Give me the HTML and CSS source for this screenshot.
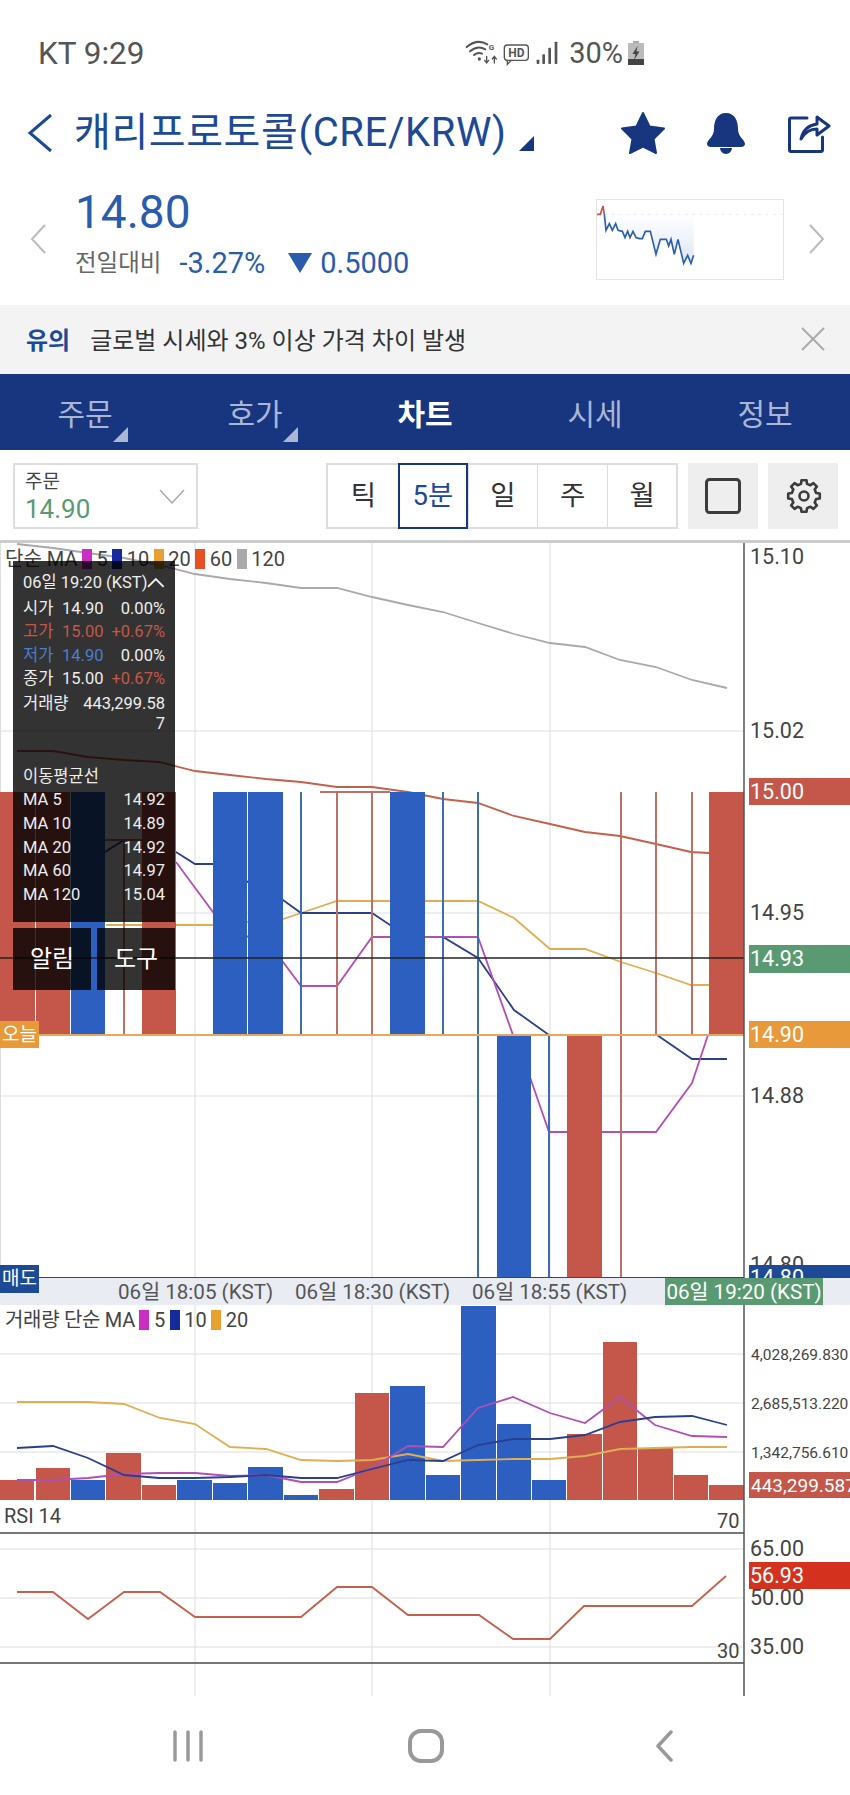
FILE: index.html
```html
<!DOCTYPE html>
<html lang="ko">
<head>
  <meta charset="UTF-8" />
  <meta name="viewport" content="width=device-width, initial-scale=1.0" />
  <title>캐리프로토콜 차트</title>
  <link rel="stylesheet" href="styles.css">
</head>
<body>
  <div class="status-bar">
    <span class="status-time">KT 9:29</span>
    <div class="status-icons">
      <svg class="net-icons" width="100" height="45" viewBox="0 0 300 135">
        <g fill="none" stroke="#555" stroke-width="6" stroke-linecap="round">
          <path d="M14 48 Q46 22 76 40" />
          <path d="M24 61 Q47 42 70 55" />
          <path d="M36 72 Q48 62 60 68" />
          <path d="M74 76 V94 M68 88 L74 96 L80 88" stroke-width="4" />
          <path d="M97 96 V78 M91 84 L97 76 L103 84" stroke-width="4" />
          <rect x="127" y="42" width="72" height="46" rx="9" stroke-width="4" />
          <path d="M136 88 V100 L148 88" stroke-width="4" />
        </g>
        <circle cx="52" cy="84" r="5" fill="#555" />
        <text class="net-g" x="80" y="56">G</text>
        <text class="net-hd" x="163" y="77">HD</text>
        <g fill="#555">
          <rect x="224" y="86" width="8" height="13" rx="2" />
          <rect x="241" y="70" width="8" height="29" rx="2" />
          <rect x="259" y="50" width="8" height="49" rx="2" />
          <rect x="278" y="32" width="8" height="67" rx="2" />
        </g>
      </svg>
      <span class="status-batt">30%</span>
      <svg width="16" height="24" viewBox="0 0 16 24">
        <rect x="5" y="0" width="6" height="3" fill="#aaa" />
        <rect x="0" y="2" width="16" height="22" rx="1" fill="#bbb" />
        <rect x="0" y="18" width="16" height="6" fill="#444" />
        <path d="M9.5 5 L4.5 13 H7.5 L6 19 L11.5 10.5 H8.5 Z" fill="#444" />
      </svg>
    </div>
  </div>

  <div class="top-header">
    <svg class="back-icon" width="26" height="40" viewBox="0 0 26 40">
      <path d="M24 2 L3 20 L24 38" fill="none" stroke="#1d4a96" stroke-width="3" />
    </svg>
    <h1 class="coin-title">캐리프로토콜(CRE/KRW)</h1>
    <span class="corner-tri title-tri"></span>
    <div class="header-actions">
      <svg width="46" height="44" viewBox="0 0 46 44">
        <path d="M23 2 L29.5 15.5 L44 17.5 L33.5 28 L36 42 L23 35.5 L10 42 L12.5 28 L2 17.5 L16.5 15.5 Z" fill="#17367f" stroke="#17367f" stroke-width="2" stroke-linejoin="round" />
      </svg>
      <svg width="40" height="42" viewBox="0 0 40 42">
        <path d="M20 1 C29 1 32 9 32 17 C32 25 39 28 39 32 C39 34 37 35 35 35 H5 C3 35 1 34 1 32 C1 28 8 25 8 17 C8 9 11 1 20 1 Z M14 36 H26 C26 39 23 42 20 42 C17 42 14 39 14 36 Z" fill="#17367f" />
      </svg>
      <svg width="43" height="42" viewBox="0 0 43 42">
        <path d="M19 6 H3 A1.5 1.5 0 0 0 1.5 7.5 V38 A1.5 1.5 0 0 0 3 39.5 H33 A1.5 1.5 0 0 0 34.5 38 V25" fill="none" stroke="#17367f" stroke-width="3" stroke-linecap="round" />
        <path d="M13 27 C15 18 21 13 29 12 V5 L41 14 L29 23 V17 C22 17 17 20 13 27 Z" fill="none" stroke="#17367f" stroke-width="3" stroke-linejoin="round" />
      </svg>
    </div>
  </div>

  <div class="quote-row">
    <svg class="quote-arrow" width="17" height="30" viewBox="0 0 17 30">
      <path d="M15 1 L2 15 L15 29" fill="none" stroke="#bbb" stroke-width="2" />
    </svg>
    <div class="quote-info">
      <div class="quote-price">14.80</div>
      <div class="quote-change">
        <span class="change-label">전일대비</span>
        <span class="change-pct">-3.27%</span>
        <span class="change-tri"></span>
        <span>0.5000</span>
      </div>
    </div>
    <div class="mini-chart">
      <svg width="186" height="79" viewBox="20 22 558 237">
        <defs>
          <linearGradient id="miniFill" x1="0" y1="0" x2="0" y2="1">
            <stop offset="0" stop-color="#2c5fbf" stop-opacity="0" />
            <stop offset="1" stop-color="#2c5fbf" stop-opacity="0.16" />
          </linearGradient>
        </defs>
        <path d="M47 65 H310 V188 L302 212 L292 188 L280 212 L263 140 L252 185 L242 140 L235 160 L228 140 L210 140 L197 185 L180 116 L165 116 L156 138 L147 138 L137 135 L128 116 L119 135 L112 116 L104 135 L96 116 L83 113 L76 93 L66 113 L57 93 L47 113 Z" fill="url(#miniFill)" />
        <path d="M20 65 H578" stroke="#ddd" stroke-width="2" stroke-dasharray="8 14" fill="none" />
        <polyline points="20,65 30,65 38,40 42,65" fill="none" stroke="#c4574a" stroke-width="5" />
        <polyline points="42,65 47,113 57,93 66,113 76,93 83,113 96,116 104,135 112,116 119,135 128,116 137,135 147,138 156,138 165,116 180,116 197,185 210,140 228,140 235,160 242,140 252,185 263,140 280,212 292,188 302,212 310,188" fill="none" stroke="#2c5fae" stroke-width="5" />
      </svg>
    </div>
    <svg class="quote-arrow" width="17" height="30" viewBox="0 0 17 30">
      <path d="M2 1 L15 15 L2 29" fill="none" stroke="#bbb" stroke-width="2" />
    </svg>
  </div>

  <div class="notice">
    <strong class="notice-tag">유의</strong>
    <span class="notice-text">글로벌 시세와 3% 이상 가격 차이 발생</span>
    <svg class="notice-close" width="24" height="24" viewBox="0 0 24 24">
      <path d="M1 1 L23 23 M23 1 L1 23" stroke="#aaa" stroke-width="2" />
    </svg>
  </div>

  <nav class="tabs">
    <div class="tab">주문<span class="corner-tri tab-tri"></span></div>
    <div class="tab">호가<span class="corner-tri tab-tri"></span></div>
    <div class="tab active">차트</div>
    <div class="tab">시세</div>
    <div class="tab">정보</div>
  </nav>

  <div class="toolbar">
    <div class="order-select">
      <div>
        <div class="order-label">주문</div>
        <div class="order-price">14.90</div>
      </div>
      <svg width="26" height="15" viewBox="0 0 26 15">
        <path d="M1 1 L13 14 L25 1" fill="none" stroke="#aaa" stroke-width="1.5" />
      </svg>
    </div>
    <div class="periods">
      <div class="period">틱</div>
      <div class="period selected">5분</div>
      <div class="period">일</div>
      <div class="period">주</div>
      <div class="period">월</div>
    </div>
    <div class="tool-btn">
      <svg width="36" height="36" viewBox="0 0 36 36">
        <rect x="1.5" y="1.5" width="33" height="33" rx="3" fill="none" stroke="#3c3c3c" stroke-width="3" />
      </svg>
    </div>
    <div class="tool-btn">
      <svg class="gear-icon" width="36" height="36" viewBox="0 0 36 36">
        <g transform="translate(18 18)" fill="none" stroke="#3c3c3c" stroke-width="2.6" stroke-linejoin="round">
          <path d="M-3 -12.1 L-2.5 -15.8 L2.5 -15.8 L3 -12.1 L6.4 -10.7 L9.4 -12.9 L12.9 -9.4 L10.7 -6.4 L12.1 -3 L15.8 -2.5 L15.8 2.5 L12.1 3 L10.7 6.4 L12.9 9.4 L9.4 12.9 L6.4 10.7 L3 12.1 L2.5 15.8 L-2.5 15.8 L-3 12.1 L-6.4 10.7 L-9.4 12.9 L-12.9 9.4 L-10.7 6.4 L-12.1 3 L-15.8 2.5 L-15.8 -2.5 L-12.1 -3 L-10.7 -6.4 L-12.9 -9.4 L-9.4 -12.9 L-6.4 -10.7 Z" />
          <circle r="4.5" />
        </g>
      </svg>
    </div>
  </div>

  <div class="chart">
    <!-- price pane, svg coords are the page y so the numbers read easy -->
    <section class="pane-main">
      <svg width="850" height="738" viewBox="0 540 850 738">
        <g class="grid">
          <path d="M0.5 543 V1278 M195 543 V1278 M372 543 V1278 M550 543 V1278" />
          <path d="M0 731 H744 M0 913 H744 M0 1096 H744" />
        </g>
        <polyline class="ma gray" points="17,544 53,548 88,553 124,558 159,565 195,574 230,579 266,583 301,588 337,588 372,597 408,605 443,612 478,623 514,634 550,643 585,647 620,660 656,667 692,680 727,688" />
        <polyline class="ma red" points="17,751 53,751 88,757 124,760 159,762 195,771 230,775 266,779 301,782 337,787 372,787 408,792 443,799 478,803 514,816 550,824 585,832 620,836 656,844 691,852 727,854" />
        <polyline class="ma yellow" points="106,925 213,925 283,919 301,913 337,901 390,901 478,901 514,918 550,949 585,949 621,962 656,973 691,985 727,985" />
        <polyline class="ma navy" points="105,852 124,840 142,840 176,852 195,864 213,864 283,900 301,913 372,913 390,925 425,937 443,937 478,958 514,1010 549,1035" />
        <polyline class="ma navy" points="657,1035 692,1059 727,1059" />
        <polyline class="ma magenta" points="176,862 213,912 283,962 301,986 337,986 372,937 478,937 513,1035 531,1080 549,1132 656,1132 692,1083 708,1035" />
        <path class="wick-blue" d="M301 792 V1035 M443 792 V1035 M478 792 V1278 M549 1035 V1278" />
        <path class="wick-red" d="M124 840 V1035 M105 840 H142 M337 792 V1035 M320 792 H390 M372 792 V1035 M621 792 V1278 M656 792 V1035 M692 792 V1035" />
        <g class="bar-red">
          <rect x="0" y="792" width="35" height="243" />
          <rect x="36" y="792" width="34" height="243" />
          <rect x="142" y="792" width="34" height="243" />
          <rect x="709" y="792" width="35" height="243" />
          <rect x="567" y="1035" width="35" height="243" />
        </g>
        <g class="bar-blue">
          <rect x="71" y="792" width="34" height="243" />
          <rect x="213" y="792" width="34" height="243" />
          <rect x="248" y="792" width="35" height="243" />
          <rect x="390" y="792" width="35" height="243" />
          <rect x="497" y="1035" width="34" height="243" />
        </g>
        <path class="line-today" d="M0 1035 H744" />
        <path class="line-cross" d="M0 958 H744" />
        <path class="line-sell" d="M0 1278 H744" />
        <path class="axis-line" d="M744 540 V1278" />
        <g class="axis-text">
          <text x="750" y="564">15.10</text>
          <text x="750" y="738">15.02</text>
          <text x="750" y="920">14.95</text>
          <text x="750" y="1103">14.88</text>
          <text x="750" y="1272">14.80</text>
        </g>
        <rect class="bar-red" x="749" y="778" width="101" height="27" />
        <text class="tag-text" x="750" y="799">15.00</text>
        <rect x="749" y="945" width="101" height="28" fill="#5a9a72" />
        <text class="tag-text" x="750" y="966">14.93</text>
        <rect x="749" y="1021" width="101" height="27" fill="#e8993a" />
        <text class="tag-text" x="750" y="1042">14.90</text>
        <rect x="749" y="1265" width="101" height="13" fill="#1d4a96" />
        <text class="tag-text" x="750" y="1285">14.80</text>
      </svg>

      <div class="legend legend-main">
        <span>단순 MA</span>
        <i class="swatch magenta"></i><span>5</span>
        <i class="swatch navy"></i><span>10</span>
        <i class="swatch orange"></i><span>20</span>
        <i class="swatch tomato"></i><span>60</span>
        <i class="swatch silver"></i><span>120</span>
      </div>

      <div class="side-tag tag-today">오늘</div>
      <div class="side-tag tag-sell">매도</div>

      <div class="overlay">
        <div class="info-box">
          <div class="info-head">
            <span>06일 19:20 (KST)</span>
            <svg width="18" height="10" viewBox="0 0 18 10">
              <path d="M1 9 L9 1 L17 9" fill="none" stroke="#eee" stroke-width="2" />
            </svg>
          </div>
          <div class="info-row"><span class="info-key">시가</span><span>14.90</span><span class="info-pct">0.00%</span></div>
          <div class="info-row up"><span class="info-key">고가</span><span>15.00</span><span class="info-pct">+0.67%</span></div>
          <div class="info-row"><span class="info-key down">저가</span><span class="down">14.90</span><span class="info-pct">0.00%</span></div>
          <div class="info-row"><span class="info-key">종가</span><span>15.00</span><span class="info-pct up">+0.67%</span></div>
          <div class="info-row volume-row"><span>거래량</span><span class="volume-val">443,299.587</span></div>
          <div class="info-title">이동평균선</div>
          <div class="ma-row"><span>MA 5</span><span>14.92</span></div>
          <div class="ma-row"><span>MA 10</span><span>14.89</span></div>
          <div class="ma-row"><span>MA 20</span><span>14.92</span></div>
          <div class="ma-row"><span>MA 60</span><span>14.97</span></div>
          <div class="ma-row"><span>MA 120</span><span>15.04</span></div>
        </div>
        <div class="overlay-btns">
          <div class="overlay-btn">알림</div>
          <div class="overlay-btn">도구</div>
        </div>
      </div>
    </section>

    <div class="time-axis">
      <span>06일 18:05 (KST)</span>
      <span>06일 18:30 (KST)</span>
      <span>06일 18:55 (KST)</span>
      <span class="time-now">06일 19:20 (KST)</span>
    </div>

    <section class="pane-volume">
      <svg width="850" height="195" viewBox="0 1305 850 195">
        <g class="grid">
          <path d="M195 1305 V1500 M372 1305 V1500 M550 1305 V1500" />
          <path d="M0 1354 H744 M0 1403 H744 M0 1452 H744" />
        </g>
        <g class="bar-red">
          <rect x="0" y="1480" width="34" height="20" />
          <rect x="36" y="1468" width="34" height="32" />
          <rect x="106" y="1453" width="35" height="47" />
          <rect x="142" y="1485" width="34" height="15" />
          <rect x="319" y="1489" width="35" height="11" />
          <rect x="355" y="1393" width="34" height="107" />
          <rect x="567" y="1434" width="35" height="66" />
          <rect x="603" y="1342" width="34" height="158" />
          <rect x="638" y="1448" width="35" height="52" />
          <rect x="674" y="1475" width="34" height="25" />
          <rect x="709" y="1485" width="35" height="15" />
        </g>
        <g class="bar-blue">
          <rect x="71" y="1480" width="34" height="20" />
          <rect x="177" y="1480" width="35" height="20" />
          <rect x="213" y="1483" width="34" height="17" />
          <rect x="248" y="1467" width="35" height="33" />
          <rect x="284" y="1495" width="34" height="5" />
          <rect x="390" y="1386" width="35" height="114" />
          <rect x="426" y="1475" width="34" height="25" />
          <rect x="461" y="1306" width="35" height="194" />
          <rect x="497" y="1424" width="34" height="76" />
          <rect x="532" y="1480" width="34" height="20" />
        </g>
        <polyline class="ma yellow" points="17,1402 53,1402 88,1402 124,1404 160,1418 195,1424 230,1447 266,1449 301,1460 337,1461 372,1460 408,1454 443,1461 478,1460 514,1459 550,1459 585,1456 620,1449 656,1448 692,1447 727,1447" />
        <polyline class="ma magenta" points="17,1480 53,1480 88,1478 124,1474 159,1473 195,1473 230,1476 266,1475 301,1482 337,1482 372,1468 408,1446 443,1447 478,1408 513,1397 550,1413 585,1423 620,1397 655,1425 692,1436 727,1437" />
        <polyline class="ma navy" points="17,1448 53,1446 88,1458 124,1475 159,1478 195,1478 230,1477 266,1475 301,1478 337,1478 372,1469 408,1460 443,1461 478,1445 513,1439 550,1439 585,1435 620,1422 655,1417 692,1416 727,1425" />
        <path class="axis-line" d="M744 1305 V1500" />
        <g class="axis-small">
          <text x="751" y="1360">4,028,269.830</text>
          <text x="751" y="1409">2,685,513.220</text>
          <text x="751" y="1458">1,342,756.610</text>
        </g>
        <rect class="bar-red" x="749" y="1472" width="101" height="26" />
        <text class="tag-text tag-vol" x="751" y="1492">443,299.587</text>
      </svg>
      <div class="legend legend-volume">
        <span class="legend-long">거래량 단순 MA</span>
        <i class="swatch magenta"></i><span>5</span>
        <i class="swatch navy"></i><span>10</span>
        <i class="swatch orange"></i><span>20</span>
      </div>
    </section>

    <section class="pane-rsi">
      <svg width="850" height="196" viewBox="0 1500 850 196">
        <g class="grid">
          <path d="M195 1500 V1696 M372 1500 V1696 M550 1500 V1696" />
          <path d="M0 1549 H744 M0 1598 H744 M0 1647 H744" />
        </g>
        <path class="rsi-limit" d="M0 1533 H744 M0 1663 H744" />
        <polyline class="ma red" points="17,1592 53,1592 88,1619 124,1592 160,1592 195,1617 301,1617 337,1587 372,1587 408,1615 479,1615 513,1639 550,1639 584,1606 692,1606 726,1576" />
        <path class="axis-line" d="M744 1500 V1696" />
        <g class="axis-text">
          <text class="rsi-label" x="4" y="1523">RSI 14</text>
          <text class="rsi-label" x="717" y="1528">70</text>
          <text class="rsi-label" x="717" y="1658">30</text>
          <text x="750" y="1556">65.00</text>
          <text x="750" y="1605">50.00</text>
          <text x="750" y="1654">35.00</text>
        </g>
        <rect x="749" y="1562" width="101" height="27" fill="#d4321f" />
        <text class="tag-text" x="750" y="1583">56.93</text>
      </svg>
    </section>
  </div>

  <div class="nav-bar">
    <svg width="32" height="32" viewBox="0 0 32 32">
      <path d="M3 2 V30 M16 2 V30 M29 2 V30" stroke="#999" stroke-width="3.5" stroke-linecap="round" />
    </svg>
    <svg width="36" height="34" viewBox="0 0 36 34">
      <rect x="2" y="2" width="32" height="30" rx="11" fill="none" stroke="#999" stroke-width="4" />
    </svg>
    <svg width="18" height="32" viewBox="0 0 18 32">
      <path d="M16 2 L3 16 L16 30" fill="none" stroke="#999" stroke-width="3.5" stroke-linecap="round" stroke-linejoin="round" />
    </svg>
  </div>
</body>
</html>
```

FILE: styles.css
```css
body {
  margin: 0;
  width: 850px;
  height: 1795px;
  overflow: hidden;
  background-color: #fff;
  font-family: Roboto, "Noto Sans CJK KR", sans-serif;
  color: #333;
}

svg {
  display: block;
}

/* status bar */
.status-bar {
  display: flex;
  align-items: center;
  height: 98px;
  padding: 8px 206px 0 38px;
  box-sizing: border-box;
  color: #555;
}

.status-time {
  font-size: 31.5px;
}

.status-icons {
  display: flex;
  align-items: center;
  margin-left: auto;
}

.status-batt {
  margin: 0 5px 0 7px;
  font-size: 29px;
}

.net-g {
  font-size: 24px;
  font-weight: 700;
  fill: #555;
}

.net-hd {
  font-size: 36px;
  font-weight: 700;
  fill: #555;
  text-anchor: middle;
}

/* header */
.top-header {
  display: flex;
  align-items: center;
  height: 70px;
  padding-left: 27px;
}

.coin-title {
  margin: 0 0 0 21px;
  font-size: 40px;
  font-weight: 400;
  line-height: 70px;
  color: #1d4a96;
  letter-spacing: 0.6px;
  white-space: nowrap;
}

.corner-tri {
  width: 0;
  height: 0;
  border-style: solid;
  border-width: 0 0 15px 15px;
  border-color: transparent transparent #17367f transparent;
}

.title-tri {
  margin: 20px 0 0 12px;
}

.header-actions {
  display: flex;
  align-items: center;
  gap: 40px;
  margin-left: 86px;
}

.header-actions svg:last-child {
  margin-left: 2px;
}

/* quote */
.quote-row {
  position: relative;
  display: flex;
  height: 137px;
  padding-left: 30px;
  box-sizing: border-box;
}

.quote-arrow {
  margin-top: 56px;
}

.quote-info {
  margin-left: 28px;
  padding-top: 19px;
  width: 522px;
}

.quote-price {
  font-size: 46px;
  line-height: 50px;
  color: #2a5cae;
}

.quote-change {
  display: flex;
  align-items: center;
  margin-top: 8px;
  font-size: 29px;
  line-height: 36px;
  color: #2a5cae;
}

.change-label {
  margin-right: 18px;
  font-size: 23.5px;
  color: #666;
}

.change-pct {
  margin-right: 23px;
}

.change-tri {
  width: 0;
  height: 0;
  margin-right: 8px;
  border-style: solid;
  border-width: 20px 12px 0 12px;
  border-color: #2a5cae transparent transparent transparent;
}

.mini-chart {
  width: 186px;
  height: 79px;
  margin-top: 32px;
  margin-right: 25px;
  outline: 1px solid #e4e4e4;
}

/* notice */
.notice {
  display: flex;
  align-items: center;
  height: 69px;
  padding: 0 25px 2px 26px;
  box-sizing: border-box;
  background-color: #f3f3f3;
  font-size: 24px;
}

.notice-tag {
  margin-right: 20px;
  font-weight: 700;
  color: #1d4a96;
}

.notice-close {
  margin-left: auto;
}

/* tabs */
.tabs {
  display: flex;
  height: 76px;
  background-color: #17367f;
}

.tab {
  position: relative;
  flex: 1;
  text-align: center;
  font-size: 30px;
  line-height: 82px;
  color: #a9b6d6;
}

.tab.active {
  font-weight: 700;
  color: #fff;
}

.tab-tri {
  position: absolute;
  left: 113px;
  top: 53px;
  border-bottom-color: #a9b6d6;
}

/* toolbar */
.toolbar {
  display: flex;
  height: 90px;
  padding: 13px 12px 0 13px;
  box-sizing: border-box;
}

.order-select {
  display: flex;
  align-items: center;
  justify-content: space-between;
  width: 186px;
  height: 66px;
  padding: 0 11px 0 10px;
  box-sizing: border-box;
  border: 2px solid #ddd;
}

.order-label {
  font-size: 19px;
  line-height: 26px;
  color: #444;
}

.order-price {
  font-size: 26px;
  line-height: 28px;
  color: #5a9a72;
}

.periods {
  display: flex;
  height: 66px;
  margin-left: 128px;
  border: 2px solid #ddd;
  box-sizing: border-box;
}

.period {
  width: 69.6px;
  box-sizing: border-box;
  border-left: 1px solid #ddd;
  text-align: center;
  font-size: 27.5px;
  line-height: 62px;
  color: #333;
}

.period:first-child {
  border-left: none;
}

.period.selected {
  height: 66px;
  margin-top: -2px;
  border: 2px solid #17367f;
  line-height: 62px;
  color: #1d4a96;
}

.tool-btn {
  display: flex;
  align-items: center;
  justify-content: center;
  width: 70px;
  height: 66px;
  margin-left: 10px;
  background-color: #eee;
}

.gear-icon {
  margin-left: 2px;
}

/* chart */
.chart {
  height: 1156px;
  font-size: 20px;
}

.pane-main {
  position: relative;
  height: 738px;
}

.pane-main::before {
  content: "";
  position: absolute;
  left: 0;
  right: 0;
  top: 0;
  height: 3px;
  background-color: #ccc;
}

.grid path {
  fill: none;
  stroke: #ddd;
  stroke-width: 1;
}

.ma {
  fill: none;
  stroke-width: 1.8;
}

.ma.gray { stroke: #a9a9a9; }
.ma.red { stroke: #c4604c; }
.ma.yellow { stroke: #e0ae50; }
.ma.navy { stroke: #2b3f8f; }
.ma.magenta { stroke: #b14fb5; }

.wick-blue {
  fill: none;
  stroke: #3d6cb8;
  stroke-width: 2;
}

.wick-red {
  fill: none;
  stroke: #bf6f63;
  stroke-width: 2;
}

.bar-red { fill: #c4574a; }
.bar-blue { fill: #2c5fbf; }

.line-today {
  stroke: #e8a85a;
  stroke-width: 2;
}

.line-cross {
  stroke: #222;
  stroke-width: 1.5;
}

.line-sell {
  stroke: #1d4a96;
  stroke-width: 2;
}

.axis-line {
  stroke: #555;
  stroke-width: 1.5;
}

.axis-text text {
  font-size: 21.5px;
  fill: #444;
}

.axis-text .rsi-label {
  font-size: 20px;
}

.axis-small text {
  font-size: 15.5px;
  fill: #444;
}

.tag-text {
  font-size: 21.5px;
  fill: #fff;
}

.tag-vol {
  font-size: 19px;
}

.rsi-limit {
  fill: none;
  stroke: #777;
  stroke-width: 2;
}

/* legends */
.legend {
  position: absolute;
  left: 5px;
  display: flex;
  align-items: center;
  gap: 4.5px;
  font-size: 20px;
  line-height: 20px;
  color: #444;
  white-space: nowrap;
}

.legend-main {
  top: 9px;
}

.legend-volume {
  top: 5px;
}

.legend-long {
  letter-spacing: -0.3px;
}

.swatch {
  display: block;
  width: 10px;
  height: 20px;
}

.swatch.magenta { background-color: #c92fc0; }
.swatch.navy { background-color: #152a9c; }
.swatch.orange { background-color: #e8a030; }
.swatch.tomato { background-color: #e84f22; }
.swatch.silver { background-color: #aaa; }

.side-tag {
  position: absolute;
  left: 0;
  width: 39px;
  height: 27px;
  text-align: center;
  font-size: 19px;
  line-height: 27px;
  color: #fff;
  z-index: 2;
}

.tag-today {
  top: 481px;
  background-color: #e8993a;
}

.tag-sell {
  top: 725px;
  height: 28px;
  background-color: #1d4a96;
}

/* tooltip over the chart */
.overlay {
  position: absolute;
  left: 13px;
  top: 21px;
  display: flex;
  flex-direction: column;
  gap: 6px;
  width: 162px;
  font-size: 16.5px;
  color: #eee;
}

.info-box {
  height: 361px;
  padding: 10px 10px 0;
  box-sizing: border-box;
  background-color: rgba(0, 0, 0, 0.8);
  line-height: 23.4px;
}

.info-head {
  display: flex;
  align-items: center;
  justify-content: space-between;
  margin-bottom: 2.5px;
  white-space: nowrap;
}

.info-row {
  display: flex;
}

.info-key {
  width: 39px;
}

.info-pct {
  margin-left: auto;
}

.up {
  color: #c4574a;
}

.down {
  color: #4a7ed0;
}

.volume-row {
  justify-content: space-between;
  line-height: 20px;
  padding-top: 3.5px;
}

.volume-val {
  width: 86px;
  text-align: right;
  word-break: break-all;
}

.info-title {
  margin-top: 31px;
}

.ma-row {
  display: flex;
  justify-content: space-between;
  line-height: 23.6px;
}

.overlay-btns {
  display: flex;
  justify-content: space-between;
}

.overlay-btn {
  width: 78px;
  height: 62px;
  background-color: rgba(0, 0, 0, 0.8);
  text-align: center;
  font-size: 24px;
  line-height: 62px;
  color: #fff;
}

/* time axis */
.time-axis {
  display: flex;
  gap: 22px;
  height: 27px;
  padding-left: 118px;
  background-color: #e9ecf3;
  font-size: 20.6px;
  line-height: 29px;
  color: #555;
  white-space: nowrap;
}

.time-axis span {
  flex: none;
  width: 155px;
}

.time-axis .time-now {
  width: 158px;
  margin-left: 16px;
  background-color: #5a9a72;
  text-align: center;
  color: #fff;
}

.pane-volume {
  position: relative;
  height: 195px;
}

.pane-rsi {
  height: 196px;
}

/* android nav */
.nav-bar {
  display: grid;
  grid-template-columns: repeat(3, 238px);
  justify-items: center;
  align-items: center;
  height: 99px;
  padding: 0 0 0 69px;
  box-sizing: border-box;
}
```
